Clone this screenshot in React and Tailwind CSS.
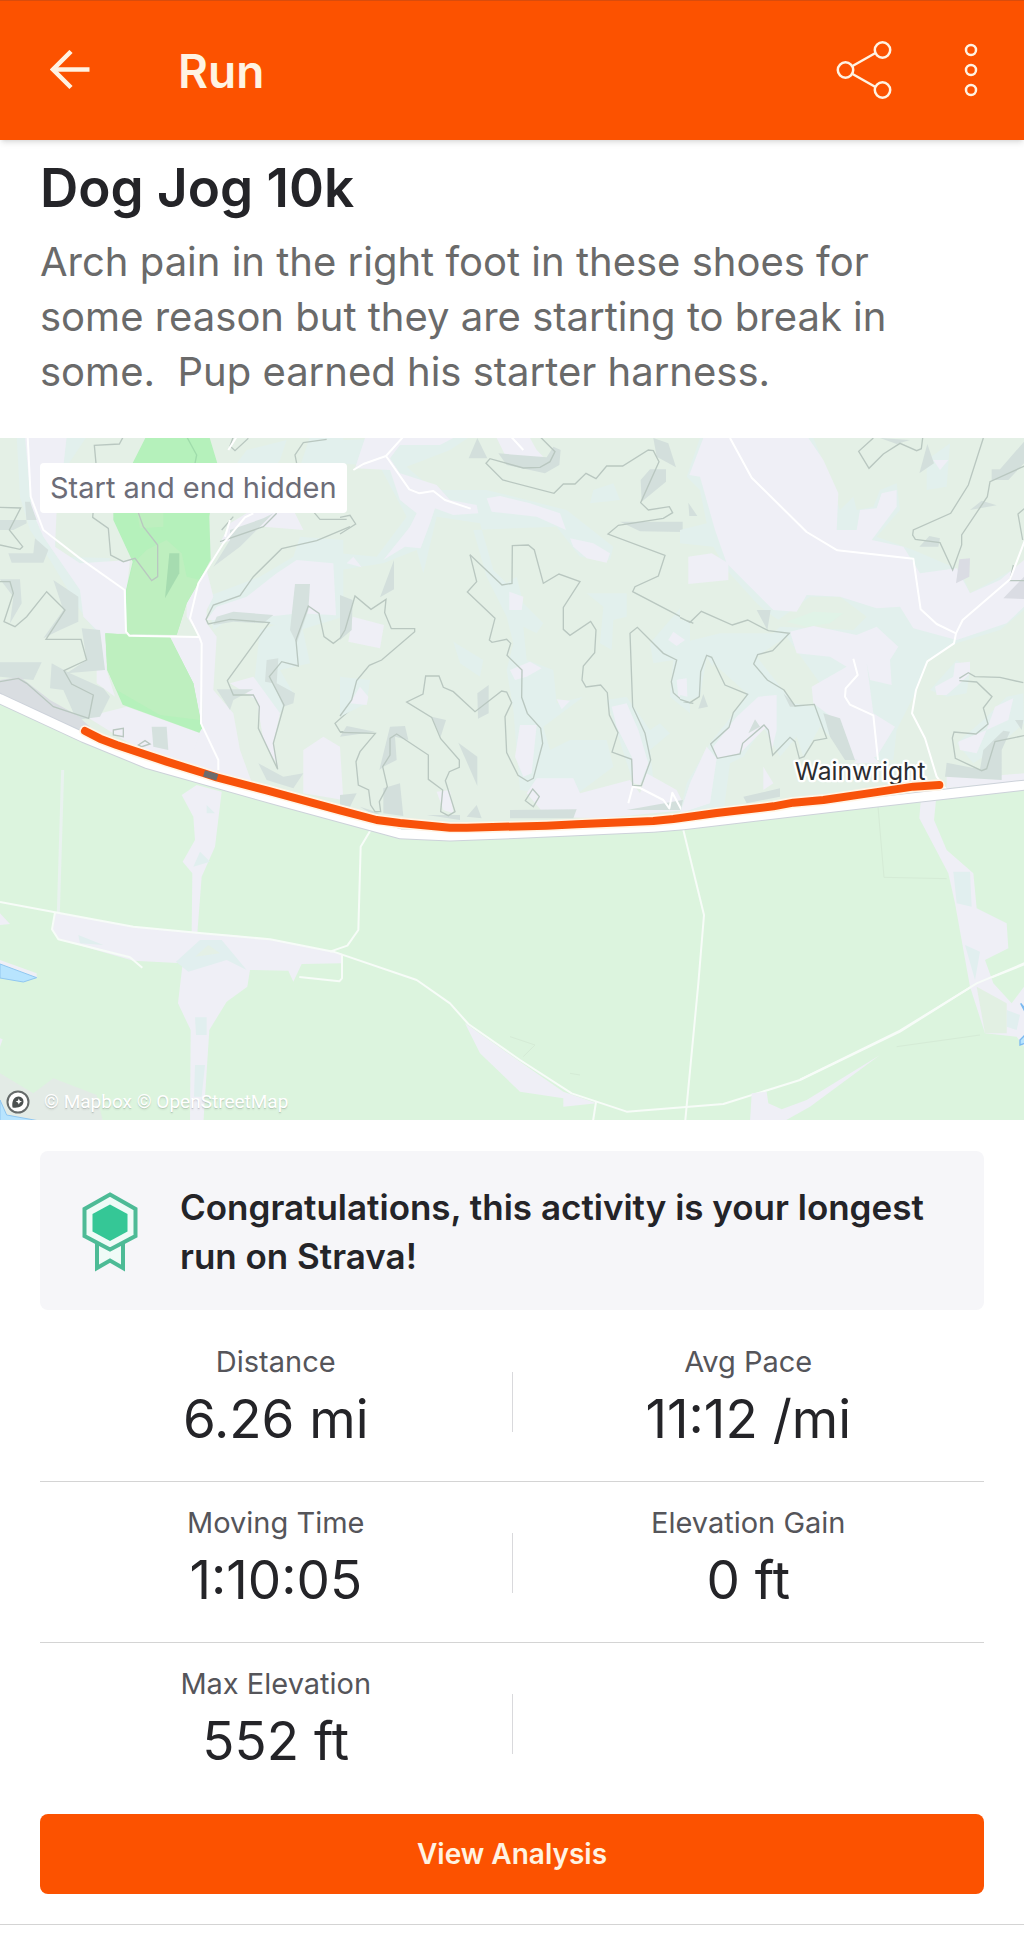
import React from 'react';

const stats = [
  [
    { label: 'Distance', value: '6.26 mi' },
    { label: 'Avg Pace', value: '11:12 /mi' },
  ],
  [
    { label: 'Moving Time', value: '1:10:05' },
    { label: 'Elevation Gain', value: '0 ft' },
  ],
  [{ label: 'Max Elevation', value: '552 ft' }, null],
];

const highway = 'M-40 762L0 782 250 898 440 976 850 1092 1200 1187 1350 1194 1560 1186 1960 1168 2050 1160 2630 1092 3112 1037';

const route =
  'M255 879L300 902 350 921 500 971 610 1005 650 1018 800 1057 1020 1117 1130 1146 1200 1155 1350 1169 1400 1169 1640 1163 1730 1159 1960 1149 2020 1143 2150 1125 2320 1105 2380 1094 2470 1086 2620 1064 2740 1046 2818 1041';

const BackIcon = () => (
  <svg viewBox="0 0 40 40" className="h-10 w-10" fill="none" stroke="currentColor" strokeWidth="4.5">
    <path d="M39.500 19.500H3" />
    <path d="M21 1.500L3 19.500 21 37.500" />
  </svg>
);

const ShareIcon = () => (
  <svg viewBox="0 0 56 60" className="h-[60px] w-14" fill="none" stroke="currentColor" strokeWidth="2.500">
    <circle cx="9.500" cy="30" r="7.700" />
    <circle cx="46.500" cy="10" r="7.700" />
    <circle cx="46.500" cy="50" r="7.700" />
    <path d="M16.500 26L39.500 13M16.500 34L39.500 47" />
  </svg>
);

const MoreIcon = () => (
  <svg viewBox="0 0 14 54" className="h-[54px] w-[14px]" fill="none" stroke="currentColor" strokeWidth="2.500">
    <circle cx="7" cy="7" r="5" />
    <circle cx="7" cy="27" r="5" />
    <circle cx="7" cy="47" r="5" />
  </svg>
);

const AwardIcon = () => (
  <svg viewBox="0 0 56 80" className="h-20 w-14 shrink-0" fill="none" stroke="#4dbb96" strokeWidth="4">
    <path d="M15 51V76L28 68.500 41 76V51" fill="#effbf7" />
    <path d="M28 2.500L53.500 17V44L28 57.500 2.500 44V17Z" fill="#effbf7" />
    <path d="M28 12.500L45.500 22V39.500L28 49 10.500 39.500V22Z" fill="#35c796" stroke="none" />
  </svg>
);

const MapboxIcon = () => (
  <svg viewBox="0 0 24 24" className="h-6 w-6">
    <circle cx="12" cy="12" r="10.500" fill="#fff" stroke="#666b6b" strokeWidth="2" />
    <path d="M6.500 17.500C5.500 11 8 6.500 12.800 6.500A5 5 0 0 1 17.500 11.500C17.500 16 13 18.500 6.500 17.500Z" fill="#4b5050" />
    <path d="M12.800 8.500L13.800 10.800 16 11.500 13.800 12.400 12.800 14.500 11.900 12.400 9.700 11.500 11.900 10.800Z" fill="#fff" />
  </svg>
);

const TerrainWest = () => (
  <g transform="translate(0 -24)">
    <g fill="#e2f0ed">
      <path d="M50 20H260L200 110 160 260 170 380 330 384 310 640 240 540 150 390 90 300 60 200Z" />
      <path d="M620 500L780 440 880 380 900 320 1030 330V560L900 600 700 560 640 600Z" />
      <path d="M780 600L900 560 930 700 840 720 880 790 820 880 760 780Z" />
      <path d="M930 20H1030V110H900Z" />
      <path d="M650 180L740 60 860 30 840 90 760 200Z" />
    </g>
    <g fill="#efeff6">
      <path d="M75 20H200L190 110 170 240 165 350 240 400 390 390 380 480 385 610 315 612 320 720 345 800 290 760 290 600 250 560 240 480 130 320 95 240Z" />
      <path d="M510 622L600 620 610 900 640 960 660 1040 560 1010 600 910 580 770Z" />
      <path d="M560 520L620 420 640 500 620 540 620 580 650 620 640 780 700 850 720 960 760 1070 660 1040 610 900 600 620 560 560Z" />
      <path d="M620 570L650 530 740 500 830 430 890 390 1000 400 1008 556 900 550 800 560 700 570Z" />
      <path d="M690 760L760 740 840 850 820 940 835 1010 790 930 770 810Z" />
      <path d="M910 960L970 920 1020 950 1030 1110 910 1090Z" />
      <path d="M740 250L880 240 910 300 790 290 700 330 660 340 690 280Z" />
      <path d="M260 860L380 830 600 910 570 1000 420 960Z" />
    </g>
    <g fill="#d5e1de">
      <path d="M0 270H110L90 215 75 215 80 280 40 300H0Z" />
      <path d="M25 370L100 370 105 325 145 360 130 398H35Z" />
      <path d="M0 448H60L65 520 30 580 40 500Z" />
      <path d="M160 450L235 500V575L180 600 130 625 190 540Z" />
      <path d="M245 595L300 600 315 720 200 730 260 690Z" />
      <path d="M0 697H125L100 750 0 740Z" />
      <path d="M155 700L210 730 310 775 330 800 300 860 230 870 190 780 150 775Z" />
      <path d="M650 560L700 545 820 555 790 580 700 575 640 585Z" />
      <path d="M885 462H930L925 540 890 640 870 600Z" />
      <path d="M800 690L835 685 830 760 885 790 880 820 850 830 820 760 795 755Z" />
      <path d="M650 778H760L700 810 690 840Z" />
      <path d="M455 890H500L505 960 460 950Z" />
      <path d="M775 1000L850 1040 910 1030 880 1075 800 1050Z" />
      <path d="M690 300L790 265 820 250 720 350 640 410 690 330Z" />
    </g>
    <path d="M0 750L60 740 150 810 230 855 270 890 240 920 120 850 0 790Z" fill="#d9dde1" />
    <g fill="#b5f1bb">
      <path d="M438 20H628L652 100 628 260 632 390 560 520 530 614 380 612 378 480 398 395 340 270V240L400 95Z" />
      <path d="M316 610L510 622 580 760 606 895 598 908 368 824 322 720Z" />
    </g>
    <g fill="#beefbf">
      <path d="M400 400L440 360 500 330 545 370 560 440 600 450 560 520 530 614 380 612 380 480Z" />
      <path d="M316 610L510 622 580 760 602 870 480 855 350 780 322 720Z" />
      <path d="M410 240H490V290L420 295Z" />
    </g>
    <path d="M508 370H538V430L495 505Z" fill="#a6dcb0" />
    <g fill="none" stroke="#b9c7c0" strokeWidth="4">
      <path d="M370 20L358 42 283 46 288 100" />
      <path d="M560 20L590 75 585 100" stroke="#9fdcab" />
      <path d="M280 240L278 262 325 295 332 375 370 395 405 385 455 452 473 440V345L430 290 414 245" />
      <path d="M0 232L62 234 28 300 68 350 60 358 0 345" />
      <path d="M0 455L30 455 40 490 12 575 45 590 80 560 140 485 195 540 138 628 243 628 260 690 192 722 215 762 280 795 266 865 160 830 80 760 55 745 0 755" />
      <path d="M700 20L690 48 705 62 745 25M890 100L885 75 910 38 980 28" />
      <path d="M665 300L700 260M660 335L790 290 830 250M1050 290L950 332 845 356 760 440 720 497 640 525 618 568 625 582 690 568 808 578 682 752 700 795 760 795 778 830 775 895 833 1018 820 940 852 825 808 740 845 695 895 708 888 630 925 528 957 550 972 620 1000 640 1020 625" />
      <path d="M940 245L960 268 1040 268M1050 840L1005 880 1020 905 1050 905M340 900L370 895V920L340 915ZM415 945L435 932 450 942 425 950Z" />
    </g>
    <g fill="none" stroke="#fff" strokeWidth="6">
      <path d="M83 20L92 200 130 300 240 385 374 480 378 605 388 617 598 621 605 640 603 880 655 990V1020" />
      <path d="M598 621L570 565 595 460 670 340 735 262 760 250M675 320L690 270M685 60L710 20" />
    </g>
  </g>
);

const TerrainCenter = () => (
  <g transform="translate(1020 -24)">
    <g fill="#e2f0ed">
      <path d="M330 60L390 20 0 30V100L120 110 200 260 110 380 0 370V420L130 400 230 360 250 430 290 260 420 280 460 420 500 460 530 440 550 520 610 580 590 610 550 590 560 690 640 720 650 820 730 800 610 890 630 960 690 930 800 930 820 1010 700 1100 540 1080 520 840 500 720 520 640 500 560 440 440 400 300 650 290 720 380 810 390 820 350 680 240 440 180 280 180 200 110Z" />
      <path d="M340 635L430 690 420 740 360 700Z" />
      <path d="M740 490H860V560L820 570 815 660 780 640 790 530Z" />
      <path d="M760 180L820 160 840 210 750 220Z" />
      <path d="M930 640L1050 500V850L990 800 1000 690 940 700Z" />
      <path d="M800 810L860 800 930 900 960 880 990 910 930 960 940 1050 880 1060Z" />
      <path d="M0 740L90 750 80 820 0 860Z" />
    </g>
    <g fill="#efeff6">
      <path d="M75 24H340L300 45 180 45 150 85 180 130 290 165 330 210 410 225 415 250 340 255 285 235 270 280 242 355 195 350 130 390 210 290 230 250 180 210 150 120 45 115Z" />
      <path d="M440 205L480 198 570 220 660 250 678 300 590 260 455 245Z" />
      <path d="M690 325L760 340 810 370 800 398 740 385 700 350Z" />
      <path d="M20 400L40 380 65 412Z" />
      <path d="M38 560L132 585 120 655 25 635Z" />
      <path d="M508 485L550 500 545 540 508 540Z" />
      <path d="M510 720L570 695 605 715 560 740 525 750Z" />
      <path d="M60 770L85 800 80 825 30 820Z" />
      <path d="M650 808L690 812 665 838Z" />
      <path d="M540 885H590L575 1030 550 1040 525 980Z" />
      <path d="M815 830L860 820 895 900 925 1000 900 1065 880 1060 875 980 830 890Z" />
      <path d="M590 1045H700L720 1090 870 1050 900 1090 920 1030 1010 1080 1040 1140 780 1165 620 1160 560 1090Z" />
      <path d="M470 24H570L590 60 610 80 500 85Z" />
      <path d="M985 630L1000 605 1035 630 1010 648Z" />
      <path d="M290 1085L330 1080 340 1150 310 1140Z" />
      <path d="M1010 750L1050 740V800H1015Z" />
    </g>
    <g fill="#d3dfdc">
      <path d="M412 24L442 85H386Z" />
      <path d="M475 70L620 82 640 50 662 60 658 105 615 130 500 105Z" />
      <path d="M940 24L985 40 1008 112 950 80Z" />
      <path d="M902 150L930 118H978V155L905 215Z" />
      <path d="M840 275L1028 275V306L900 304Z" />
      <path d="M162 390V478L120 502Z" />
      <path d="M0 495L38 510 35 600 0 630Z" />
      <path d="M412 790L446 765V850L414 866Z" />
      <path d="M275 860L318 870 302 920Z" />
      <path d="M150 890L195 888 205 930 165 920 170 990 130 1010 118 1020Z" />
      <path d="M355 938L412 980V1068Z" />
      <path d="M20 888L105 905 0 920Z" />
      <path d="M0 1095L50 1090 30 1130 0 1125Z" />
      <path d="M130 1075L180 1060 190 1158 130 1150Z" />
      <path d="M510 1140L710 1138 700 1165H510Z" />
      <path d="M380 1160L410 1125 425 1165ZM260 1155H360V1170ZM860 1140L1040 1108 1030 1140Z" />
      <path d="M60 1130L120 1150 100 1155Z" />
    </g>
    <g fill="none" stroke="#b9c7c0" strokeWidth="4">
      <path d="M600 20L645 65 630 95 600 112 550 114 450 86 438 100 488 150 642 190 670 162 705 162 738 130 768 146 800 108 848 108 925 60 940 62 957 95 902 218 925 240 988 230 998 248 970 265 835 286 804 312 975 376 955 438 885 470 878 485 1060 580" />
      <path d="M0 625L15 600 45 498 93 538 138 508 134 548 154 596H224V605L125 690 88 706 50 752 35 810 0 858" />
      <path d="M390 374L486 465 516 460 517 347 565 345 583 360 610 460 657 432 720 455 670 532V598L690 616 752 574 768 600 764 668 730 708 726 750 738 771 782 765 802 788 808 855 834 908 816 966 875 988 878 1067H904L932 990 915 910 878 830 870 610 892 592 970 670 1010 690 994 755 1000 788 1030 815 1060 820" />
      <path d="M390 374L410 455 382 486 465 565 448 630 456 637 500 628 512 640 501 676 546 720 545 802 562 850 602 895 608 940 580 1045 563 1054 534 1036 500 968 495 860 515 818 500 786 485 783 405 845 340 785 310 772 297 738H257L249 792 200 816 275 862 302 926 358 990V1012L328 1025 316 1052 345 1145 325 1157 302 1145 308 1080 265 1048V975L170 912 150 925V975L128 1010 142 1070 118 1115 122 1145H105L92 1125 86 1080 55 1065 48 995 60 965 106 910 0 907" />
      <path d="M578 1077L598 1100 580 1130 556 1112ZM0 262L30 256 47 282 0 312" />
    </g>
    <g fill="none" stroke="#fff" strokeWidth="6" strokeLinejoin="round">
      <path d="M190 20L138 78 70 102 40 120M138 78L208 178 238 190 280 183 315 210 392 236M515 22L550 60" />
      <path d="M865 1120L878 1070 900 1074 970 1110 988 1135 997 1088 1030 1150" />
    </g>
  </g>
);

const TerrainEast = () => (
  <g transform="translate(2040 -24)">
    <g fill="#e2f0ed">
      <path d="M60 24L20 140 60 180 80 280 0 300V340L100 350 140 420 230 520 260 545 310 580 280 610 120 610 0 640V820L60 800 80 680 140 780 200 800 90 940 20 1060 0 1150H130L150 1000 190 980 250 890 300 980 350 920 370 980 420 890 520 990H640L650 900 700 800 740 690 830 640 960 600 1032 540V400L870 490 840 420 700 360 590 320 660 240 650 160 600 180 580 230 530 240 520 200 480 240 440 120 400 24Z" />
      <path d="M740 90L810 40 800 170 740 180Z" />
      <path d="M750 780L830 690 870 720 860 790 800 800Z" />
      <path d="M910 870L980 800 1030 790 1032 880 940 960 880 1000 830 940Z" />
    </g>
    <g fill="#e4f0e6">
      <path d="M390 500L480 500 560 560 520 600 300 590 240 610Z" />
      <path d="M100 700L200 790 130 890 60 900Z" />
      <path d="M230 680L320 620 420 760 400 830 340 820Z" />
      <path d="M0 460L140 450 230 530 150 580 0 570Z" />
    </g>
    <g fill="#efeff6">
      <path d="M70 24H385L430 90 475 190 470 300 530 300 540 240 590 235 605 190 650 180 650 230 575 330 670 350 720 430 830 415 870 490 960 450 1032 390V530L980 580 830 630 700 595 660 530 590 535 480 500 380 495 350 545 280 540 140 400 105 300 60 140 28 135Z" />
      <path d="M330 605L400 588 530 615 590 590 655 650 630 690 635 765 570 750 560 700 580 850 645 890 590 980 520 990 480 880 400 820 395 770 500 710 450 680 350 670Z" />
      <path d="M25 380L95 370 145 400V450L25 462Z" />
      <path d="M0 748L20 745 22 800 0 795Z" />
      <path d="M100 950L170 860 235 800 290 795V900L275 960 260 890 180 970 110 985Z" />
      <path d="M30 1060L80 950 110 985 90 1120 0 1150Z" />
      <path d="M765 770L820 740 825 700 870 695 870 730 840 760 800 795H770Z" />
      <path d="M945 830L1000 805 985 870 920 900 890 970 840 960 835 935 920 900Z" />
      <path d="M250 1010L280 1060 250 1080ZM560 960L600 1000H520ZM800 1010L900 1040 1032 1030V1050L800 1075Z" />
      <path d="M760 90H805L780 120Z" />
    </g>
    <path d="M320 575L400 545 490 550 450 580 380 590Z" fill="#e0f3e7" />
    <g fill="#d3dfdc">
      <path d="M742 42L762 100 718 130Z" />
      <path d="M1032 35L960 118H935V150H985L1032 100Z" />
      <path d="M870 240L905 212 950 226Z" />
      <path d="M718 350L748 318 780 325 775 350Z" />
      <path d="M25 218L52 258H28ZM230 540H272L262 600Z" />
      <path d="M70 792L84 830 55 836Z" />
      <path d="M310 790L350 830H330ZM430 850L480 865 525 990H495L450 920Z" />
      <path d="M225 868L240 890 205 910ZM1005 870H1030L1025 900ZM910 960L970 902 990 905 965 960V1050L795 1040 800 998 900 1018Z" />
      <path d="M190 1100L300 1075V1100L200 1120ZM600 24L650 42 690 30Z" />
    </g>
    <g fill="#dadce3">
      <path d="M838 388L870 385 868 440 828 460Z" />
      <path d="M970 505L1032 440V507Z" />
    </g>
    <g fill="none" stroke="#b9c7c0" strokeWidth="4">
      <path d="M580 24L536 64 567 115 610 72 660 40 710 62 724 56 728 24" />
      <path d="M910 24L865 165 812 250 700 300 698 315 706 328 780 338 818 420 845 345V315L922 200 930 155 1040 105" />
      <path d="M1040 230L1014 252 1028 330M1000 405L990 452H1040" />
      <path d="M0 562L30 577 64 544 157 585 203 570 265 602 328 610 278 662 233 674 221 702 262 750 312 780 345 828 403 823 440 925 402 932 372 980 358 985 345 935 330 922 278 976 265 900 252 885 188 940 180 972 112 985 92 942 147 892 160 848 203 793 135 765 95 682 80 676 62 725 58 800 30 818 0 808" />
      <path d="M838 745L865 728 885 740 960 742 1030 758M838 752L890 756 936 800 910 834 924 882 888 912 822 906 817 924 826 985 905 1022 920 1016 945 935 1040 915" />
    </g>
    <g fill="none" stroke="#fff" strokeWidth="6" strokeLinejoin="round">
      <path d="M150 24L215 143 380 306 472 361 700 386 722 538 770 582 828 610 822 640 742 694 708 780 696 850 735 925 770 1040 800 1080" />
      <path d="M828 610L848 570 990 448 1035 330M520 686L533 735 497 775 495 800 510 824 580 856 594 990" />
    </g>
  </g>
);

const Lowland = () => (
  <>
    <path d="M-40 762L0 782 250 898 440 976 850 1092 1200 1187 1350 1194 1560 1186 1960 1168 2050 1160 2630 1092 3112 1037V2100H-40Z" fill="#dcf4de" />
    <g transform="translate(0 996)">
      <g fill="#efeff6">
        <path d="M590 45L665 65 645 230 605 320 592 490 700 495 830 512 1025 550V580L905 582 880 635 865 602 750 600 742 650 680 695 628 780 610 1060H570L572 780 534 700 548 580 400 572 175 508 158 480 165 428 400 470 575 485 577 310 548 275 585 210 580 140 545 75Z" />
        <path d="M1395 760L1560 875 1690 965 1790 1000 1690 1010 1690 985 1560 965 1440 850Z" />
        <path d="M0 430L30 462 0 465ZM0 570L110 610V625L0 590ZM0 805L8 808 0 830Z" />
      </g>
      <path d="M188 0L175 430" stroke="#e9f2ef" strokeWidth="9" />
      <path d="M0 910L100 970 160 925 290 975 310 1060H0Z" fill="#e3ebe6" />
      <g fill="#e1efef">
        <path d="M528 575L600 510H665L740 600 680 570 565 605ZM235 495L310 525 240 520ZM585 742H620V795H588ZM585 885H615L605 980H582ZM600 245L630 275 580 290ZM620 105L645 130 620 130Z" />
      </g>
      <path d="M585 560L625 525 660 550Z" fill="#e4f0e6" />
      <path d="M0 582L110 623 70 636 0 624Z" fill="#b8e4fe" stroke="#8fc6f0" strokeWidth="3" />
      <path d="M0 990L20 1035 130 1055H0Z" fill="#b8e4fe" stroke="#8fc6f0" strokeWidth="3" />
      <g fill="none" stroke="#f7fcf8" strokeWidth="6" strokeLinejoin="round">
        <path d="M0 396L165 427 400 470 590 488 810 508 1000 545 1250 630 1350 700 1405 762 1560 870 1715 970 1880 1025 2170 1002 2400 930 2700 785 2930 640 3080 580" />
        <path d="M165 427L156 478 175 508 390 562 427 593M990 545L1042 527 1075 480 1082 230 1112 180M1026 555V625L1018 634 898 621" />
        <path d="M2050 180L2112 435 2095 640 2055 1060M1788 996L1778 1060" />
      </g>
    </g>
    <g transform="translate(1530 996)">
      <g fill="#efeff6">
        <path d="M1232 95L1278 90 1272 150 1310 240 1390 310 1400 415 1490 460 1495 535 1425 570 1450 640 1505 700 1542 650V830L1520 800 1425 790 1380 650 1335 400 1315 310 1228 145Z" />
        <path d="M725 970L770 965 775 1000 815 1018 890 990 1110 855 900 1010 820 1055H720Z" />
      </g>
      <path d="M1330 305H1380L1385 410 1340 400ZM1365 525L1410 545 1395 630ZM1490 720L1530 735 1520 780 1490 770Z" fill="#e1efef" />
      <path d="M1400 650L1490 700V790H1425Z" fill="#e2f0e3" />
      <path d="M1104 110L1122 322 1310 326M1160 830L1410 795M0 800L75 825 40 860M180 910L210 915" fill="none" stroke="#d5ebd6" strokeWidth="3" />
      <path d="M1532 700L1545 715V725ZM1545 795L1530 810V825L1545 820Z" fill="#b8e4fe" stroke="#79b8f0" strokeWidth="4" />
      <path d="M870 929L1170 782 1400 640 1550 577" fill="none" stroke="#f7fcf8" strokeWidth="6" />
    </g>
  </>
);

const ActivityMap = () => (
  <div className="relative">
    <svg
      viewBox="0 0 3072 2046"
      preserveAspectRatio="xMidYMid slice"
      className="block aspect-[512/341] w-full"
      role="img"
      aria-label="Map of the run near Wainwright"
    >
      <rect width="3072" height="2046" fill="#e4f0e6" />
      <TerrainWest />
      <TerrainCenter />
      <TerrainEast />
      <Lowland />
      <g fill="none" strokeLinejoin="round">
        <path d={highway} stroke="#cdd2da" strokeWidth="33" />
        <path d={highway} stroke="#fff" strokeWidth="27" />
      </g>
      <text
        x="2384"
        y="1026"
        fontSize="74"
        fill="#2c2c30"
        stroke="#fff"
        strokeWidth="14"
        strokeLinejoin="round"
        paintOrder="stroke"
        className="font-['Inter',sans-serif]"
      >
        Wainwright
      </text>
      <g fill="none" strokeLinecap="round" strokeLinejoin="round">
        <path d={route} stroke="#fff5e6" strokeWidth="34" />
        <path d={route} stroke="#f8520a" strokeWidth="24" />
        <path d="M612 1006L652 1018" stroke="#6c6c6c" strokeWidth="20" strokeLinecap="butt" />
      </g>
    </svg>
    <span className="absolute left-10 top-[25px] flex h-[50px] items-center rounded bg-white px-2.5 text-[29px] text-[#6d6d78]">
      Start and end hidden
    </span>
    <div className="absolute bottom-1 left-1.5 flex h-7 items-center gap-3.5 font-['Roboto',sans-serif] text-[19px] text-white text-shadow-sm">
      <MapboxIcon />
      <p>
        <a href="#mapbox">© Mapbox</a> <a href="#osm">© OpenStreetMap</a>
      </p>
    </div>
  </div>
);

const Stat = ({ label, value }) => (
  <div className="text-center">
    <dt className="text-[29px] leading-9 text-[#55555a]">{label}</dt>
    <dd className="mt-2 text-[53px] leading-[62px] text-[#242428]">{value}</dd>
  </div>
);

const App = () => {
  return (
    <div className="min-h-screen bg-white font-['Inter',sans-serif]">
      <header className="relative flex h-[140px] items-center border-t border-[#d94c0c] bg-[#fc5200] pb-0.5 pl-[50px] pr-[46px] text-[#fff3e2] shadow-md">
        <button type="button" aria-label="Back">
          <BackIcon />
        </button>
        <h1 className="ml-[88px] grow pt-1 text-[46px] font-semibold">Run</h1>
        <button type="button" aria-label="Share">
          <ShareIcon />
        </button>
        <button type="button" aria-label="More options" className="ml-[72px]">
          <MoreIcon />
        </button>
      </header>

      <main>
        <section className="px-10 pb-[39px] pt-[15px]">
          <h2 className="text-[53px] font-semibold leading-[66px] text-[#242428]">Dog Jog 10k</h2>
          <p className="mt-[13px] pr-10 text-[40px] leading-[55px] text-[#6a6a6a]">
            Arch pain in the right foot in these shoes for some reason but they are starting to break in some.&nbsp; Pup
            earned his starter harness.
          </p>
        </section>

        <ActivityMap />

        <section className="px-10 pt-[31px]">
          <div className="flex items-center gap-[42px] rounded-lg bg-[#f6f6f9] px-[42px] pb-[29px] pt-8">
            <AwardIcon />
            <p className="text-[35px] font-semibold leading-[49px] text-[#242428]">
              Congratulations, this activity is your longest run on Strava!
            </p>
          </div>

          <dl className="mt-[11px] divide-y divide-[#d4d4d4]">
            {stats.map(([left, right]) => (
              <div key={left.label} className="grid h-[161px] grid-cols-[1fr_1px_1fr] items-start pt-[23px]">
                <Stat {...left} />
                <span className="mt-7 h-[60px] bg-[#d9d9dc]" />
                {right && <Stat {...right} />}
              </div>
            ))}
          </dl>

          <button
            type="button"
            className="mt-2.5 h-20 w-full rounded-lg bg-[#fc5200] text-[28px] font-semibold text-[#fff3e2]"
          >
            View Analysis
          </button>
        </section>
        <hr className="mt-[30px] border-[#d4d4d4]" />
      </main>
    </div>
  );
};

export default App;
